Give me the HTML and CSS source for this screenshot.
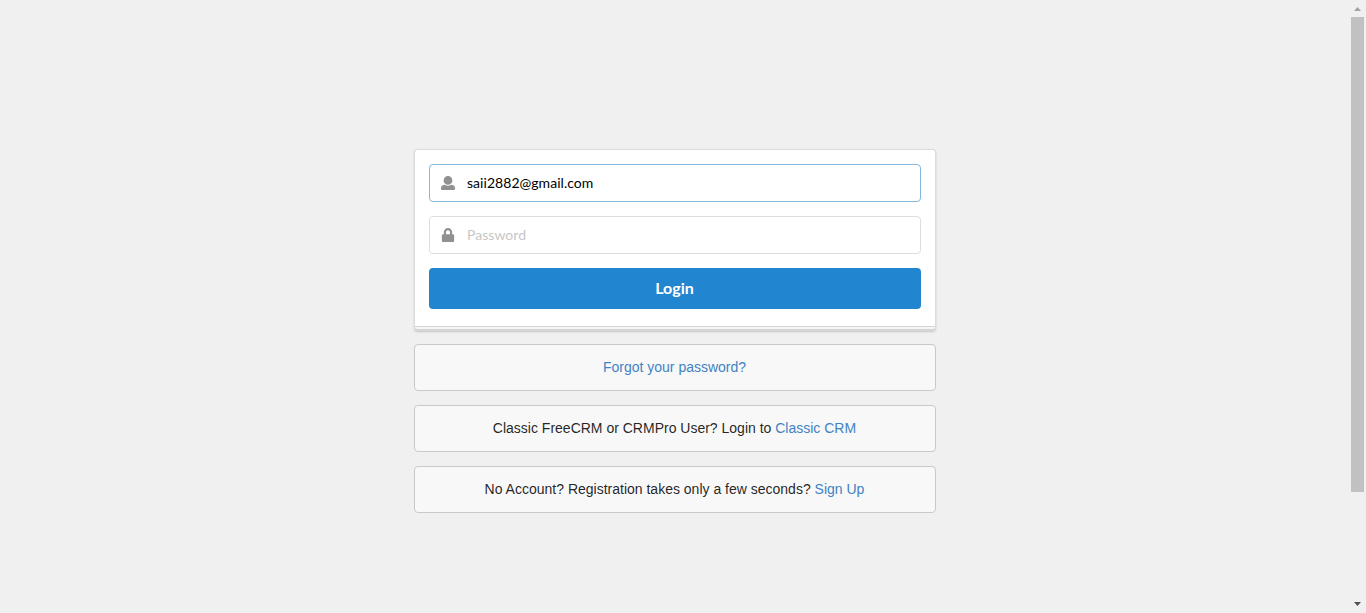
FILE: index.html
```
<!DOCTYPE html>
<html lang="en">
<head>
<meta charset="utf-8">
<title>Login</title>
<link rel="stylesheet" href="styles.css">
</head>
<body>
<main class="page">
  <div class="column">
    <form class="segment">
      <label class="field focused">
        <svg class="icon" viewBox="0 0 512 512"><path d="M256 0c88.366 0 160 71.634 160 160s-71.634 160-160 160S96 248.366 96 160 167.634 0 256 0zm183.283 333.821l-71.313-17.828c-74.923 53.89-165.738 41.864-223.94 0l-71.313 17.828C29.981 344.505 0 382.903 0 426.955V464c0 26.51 21.49 48 48 48h416c26.51 0 48-21.49 48-48v-37.045c0-44.052-29.981-82.45-72.717-93.134z"/></svg>
        <input type="text" value="saii2882@gmail.com">
      </label>
      <label class="field">
        <svg class="icon" viewBox="-32 0 512 512"><path d="M400 224h-24v-72C376 68.2 307.8 0 224 0S72 68.2 72 152v72H48c-26.5 0-48 21.5-48 48v192c0 26.5 21.5 48 48 48h352c26.5 0 48-21.5 48-48V272c0-26.5-21.5-48-48-48zm-104 0H152v-72c0-39.7 32.3-72 72-72s72 32.3 72 72v72z"/></svg>
        <input type="password" placeholder="Password">
      </label>
      <button class="login" type="button">Login</button>
      <div class="stack-edge"></div>
    </form>
    <div class="message"><a href="#">Forgot your password?</a></div>
    <div class="message">Classic FreeCRM or CRMPro User? Login to <a href="#">Classic CRM</a></div>
    <div class="message">No Account? Registration takes only a few seconds? <a href="#">Sign Up</a></div>
  </div>
</main>
<aside class="scrollbar">
  <svg class="arrow" viewBox="0 0 15 17"><path fill="#a3a3a3" d="M3 11L6.5 7L10 11z"/></svg>
  <div class="thumb"></div>
  <svg class="arrow end" viewBox="0 0 15 17"><path fill="#505050" d="M3 6H10L6.5 10z"/></svg>
</aside>
</body>
</html>
```
FILE: styles.css
```
* { box-sizing: border-box; }
body {
  margin: 0;
  height: 613px;
  display: flex;
  overflow: hidden;
  background: #f0f0f0;
  font: 14px/20px "Liberation Sans", Arial, sans-serif;
  color: rgba(0, 0, 0, .87);
}
.page {
  flex: 1;
  display: flex;
  justify-content: center;
  padding: 149px 1px 0 0;
}
.column {
  width: 522px;
  display: flex;
  flex-direction: column;
  gap: 14px;
}
.segment {
  height: 181px;
  padding: 14px 14px 0;
  display: flex;
  flex-direction: column;
  background: #fff;
  border: 1px solid #dcdcdc;
  border-bottom: 0;
  border-radius: 4px;
  box-shadow: 0 1px 2px rgba(34, 36, 38, .2);
}
.field {
  height: 38px;
  margin-bottom: 14px;
  padding-left: 11px;
  display: flex;
  align-items: center;
  gap: 12px;
  border: 1px solid #dededf;
  border-radius: 4px;
  background: #fff;
}
.field.focused { border-color: #85b7d9; }
.icon {
  width: 14px;
  height: 14px;
  flex: none;
  fill: #919191;
}
.field input {
  flex: 1;
  padding: 0 0 2px;
  border: 0;
  outline: 0;
  background: none;
  font: 14px/17px Lato, sans-serif;
  letter-spacing: .04px;
  color: #000;
}
.field input::placeholder { color: #c7c7c7; }
.login {
  height: 41px;
  flex: none;
  padding: 0 1px 2px 0;
  border: 0;
  border-radius: 4px;
  background: #2185d0;
  color: #fff;
  font: 700 16px/16px Lato, sans-serif;
}
.stack-edge {
  height: 5px;
  margin: auto -14px 0;
  border-top: 1px solid #d4d4d5;
  border-bottom: 2px solid #d4d4d5;
  border-radius: 0 0 3px 3px;
  background: #f6f6f6;
}
.message {
  height: 47px;
  display: flex;
  align-items: center;
  justify-content: center;
  white-space: pre;
  border: 1px solid #c8c9c9;
  border-radius: 4px;
  background: #f8f8f8;
  padding: 0 1px 1px 0;
}
.segment { height: 182px; margin-bottom: -1px; }
.message a {
  color: #4183c4;
  text-decoration: none;
}
.scrollbar {
  width: 15px;
  height: 613px;
  display: flex;
  flex-direction: column;
}
.arrow {
  width: 15px;
  height: 17px;
  flex: none;
}
.arrow.end { margin-top: auto; }
.thumb {
  width: 13px;
  height: 475px;
  background: #c1c1c1;
}
```
